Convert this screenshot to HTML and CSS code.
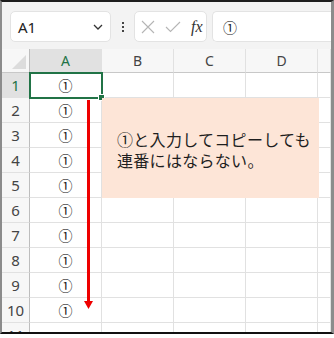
FILE: index.html
```html
<!doctype html>
<html lang="ja">
  <head>
    <meta charset="UTF-8" />
    <title>連番にはならない</title>
    <link rel="stylesheet" href="styles.css">
  </head>
  <body>
    <div class="frame">
      <div class="toolbar">
        <div class="name-box">
          <span class="name">A1</span>
          <svg class="chevron" width="10" height="6" viewBox="0 0 10 6">
            <path d="M1 1 L5 5 L9 1" fill="none" stroke="#333" stroke-width="1.3" />
          </svg>
        </div>
        <div class="dots"><i></i><i></i><i></i></div>
        <div class="fx-box">
          <svg width="14" height="14" viewBox="0 0 14 14">
            <path d="M1 1 L13 13 M13 1 L1 13" stroke="#b5b5b5" stroke-width="1.1" />
          </svg>
          <svg width="16" height="12" viewBox="0 0 16 12">
            <path d="M1 6 L5.5 10.5 L15 1" fill="none" stroke="#b5b5b5" stroke-width="1.1" />
          </svg>
          <span class="fx">fx</span>
        </div>
        <div class="formula">①</div>
      </div>

      <div class="sheet">
        <div class="grid">
          <div class="corner"></div>
          <div class="col-head active">A</div>
          <div class="col-head">B</div>
          <div class="col-head">C</div>
          <div class="col-head">D</div>
          <div class="col-head"></div>

          <div class="row-head active">1</div>
          <div class="cell sel">①</div><div class="cell"></div><div class="cell"></div><div class="cell"></div><div class="cell"></div>
          <div class="row-head">2</div>
          <div class="cell">①</div><div class="cell"></div><div class="cell"></div><div class="cell"></div><div class="cell"></div>
          <div class="row-head">3</div>
          <div class="cell">①</div><div class="cell"></div><div class="cell"></div><div class="cell"></div><div class="cell"></div>
          <div class="row-head">4</div>
          <div class="cell">①</div><div class="cell"></div><div class="cell"></div><div class="cell"></div><div class="cell"></div>
          <div class="row-head">5</div>
          <div class="cell">①</div><div class="cell"></div><div class="cell"></div><div class="cell"></div><div class="cell"></div>
          <div class="row-head">6</div>
          <div class="cell">①</div><div class="cell"></div><div class="cell"></div><div class="cell"></div><div class="cell"></div>
          <div class="row-head">7</div>
          <div class="cell">①</div><div class="cell"></div><div class="cell"></div><div class="cell"></div><div class="cell"></div>
          <div class="row-head">8</div>
          <div class="cell">①</div><div class="cell"></div><div class="cell"></div><div class="cell"></div><div class="cell"></div>
          <div class="row-head">9</div>
          <div class="cell">①</div><div class="cell"></div><div class="cell"></div><div class="cell"></div><div class="cell"></div>
          <div class="row-head">10</div>
          <div class="cell">①</div><div class="cell"></div><div class="cell"></div><div class="cell"></div><div class="cell"></div>
          <div class="row-head">11</div>
          <div class="cell"></div><div class="cell"></div><div class="cell"></div><div class="cell"></div><div class="cell"></div>
        </div>

        <svg class="arrow" width="10" height="210" viewBox="0 0 10 210">
          <rect x="3" y="0" width="3" height="202" fill="#ee0000" />
          <path d="M0 201 L9 201 L4.5 209 Z" fill="#ee0000" />
        </svg>

        <div class="note">
          <p>①と入力してコピーしても<br>連番にはならない。</p>
        </div>
      </div>
    </div>
  </body>
</html>
```

FILE: styles.css
```css
:root {
  --grid-line: #e1e1e1;
  --head-bg: #f7f7f7;
  --head-active: #e1e1e1;
  --excel-green: #217346;
  --ui-font: "Noto Sans", "Noto Sans CJK JP", sans-serif;
}

body {
  margin: 0;
  background: #ffffff;
  font-family: var(--ui-font);
}

.frame {
  width: 334px;
  height: 334px;
  box-sizing: border-box;
  border-top: 2px solid #1e1e1e;
  border-left: 2px solid #8c8c8c;
  border-right: 3px solid #8c8c8c;
  border-bottom: 2px solid #111111;
  background: #f3f3f3;
  overflow: hidden;
}

/* toolbar: name box + formula bar */
.toolbar {
  height: 47px;
  box-sizing: border-box;
  padding: 9px 0 0 8px;
  display: flex;
  align-items: flex-start;
}

.name-box,
.fx-box,
.formula {
  height: 31px;
  box-sizing: border-box;
  background: #ffffff;
  border: 1px solid #e3e3e3;
  border-radius: 5px;
  display: flex;
  align-items: center;
}

.name-box {
  width: 101px;
  padding: 0 7px 0 7px;
  justify-content: space-between;
}

.name {
  font-size: 15px;
  color: #222;
}

.chevron {
  margin-top: 1px;
}

.dots {
  width: 23px;
  display: flex;
  flex-direction: column;
  align-items: center;
  gap: 2px;
  padding-top: 11px;
}

.dots i {
  width: 2px;
  height: 2px;
  background: #444;
}

.fx-box {
  width: 73px;
  padding: 0 0 0 6px;
  gap: 10px;
  border-right: 1px solid #e3e3e3;
}

.fx {
  font-family: "Liberation Serif", serif;
  font-style: italic;
  font-size: 16px;
  color: #333;
}

.formula {
  flex: 1;
  margin-left: 5px;
  border-right: none;
  border-radius: 5px 0 0 5px;
  padding-left: 10px;
  font-family: "Noto Sans CJK JP", sans-serif;
  font-size: 14px;
  color: #222;
}

/* sheet */
.sheet {
  position: relative;
  background: #ffffff;
}

.grid {
  display: grid;
  grid-template-columns: 28px 72px 72px 72px 72px 1fr;
  grid-template-rows: 24px repeat(11, 25px);
}

.corner {
  background: var(--head-bg);
  border-right: 1px solid #bdbdbd;
  border-bottom: 1px solid #c8c8c8;
  position: relative;
}

.corner::after {
  content: "";
  position: absolute;
  right: 3px;
  bottom: 3px;
  border-left: 14px solid transparent;
  border-bottom: 14px solid #dcdcdc;
}

.col-head,
.row-head {
  display: flex;
  align-items: center;
  justify-content: center;
  background: var(--head-bg);
  color: #444;
  font-size: 14px;
}

.col-head {
  border-right: 1px solid var(--grid-line);
  border-bottom: 1px solid #c8c8c8;
}

.row-head {
  border-right: 1px solid #bdbdbd;
  border-bottom: 1px solid var(--grid-line);
  font-size: 15px;
}

.col-head.active,
.row-head.active {
  background: var(--head-active);
  color: var(--excel-green);
}

.cell {
  border-right: 1px solid var(--grid-line);
  border-bottom: 1px solid var(--grid-line);
  display: flex;
  align-items: center;
  justify-content: center;
  font-family: "Noto Sans CJK JP", sans-serif;
  font-size: 14px;
  color: #111;
}

.cell.sel {
  position: relative;
  outline: 2px solid var(--excel-green);
  outline-offset: -1px;
}

.cell.sel::after {
  content: "";
  position: absolute;
  right: -4px;
  bottom: -4px;
  width: 5px;
  height: 5px;
  background: var(--excel-green);
  border: 1px solid #ffffff;
}

.arrow {
  position: absolute;
  left: 82px;
  top: 51px;
}

.note {
  position: absolute;
  left: 100px;
  top: 49px;
  width: 217px;
  height: 100px;
  box-sizing: border-box;
  padding: 4px 0 0 15px;
  background: #fde5d7;
  display: flex;
  align-items: center;
}

.note p {
  margin: 0;
  font-family: "Noto Sans CJK JP", sans-serif;
  font-size: 16px;
  line-height: 21px;
  color: #1e1e1e;
  letter-spacing: 0.3px;
}
```
